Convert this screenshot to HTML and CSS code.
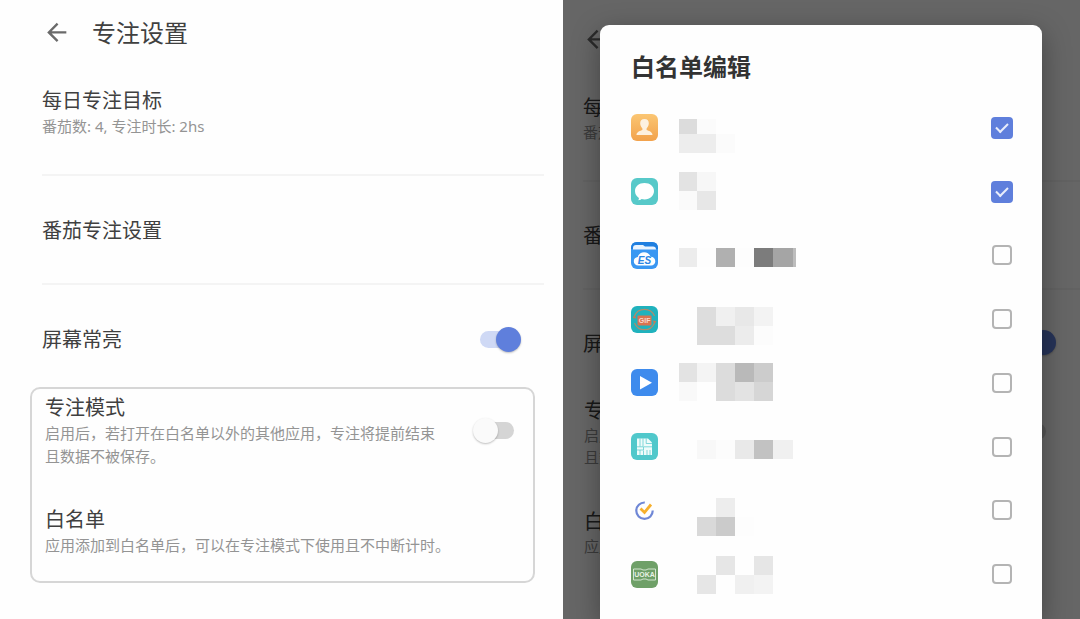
FILE: index.html
```html
<!DOCTYPE html>
<html lang="zh-CN">
<head>
<meta charset="utf-8">
<meta name="viewport" content="width=device-width, initial-scale=1">
<title>专注设置</title>
<link rel="stylesheet" href="styles.css">
</head>
<body>
<div class="screens">
  <main class="pane">
    <header class="header">
      <button class="back" type="button"><svg viewBox="0 0 24 24"><path d="M20 11.500H5M12.500 4L5 11.500L12.500 19"/></svg></button>
      <h1 class="title">专注设置</h1>
    </header>
    <section class="list">
      <div class="item item-goal">
        <h2 class="name">每日专注目标</h2>
        <p class="note">番茄数: 4, 专注时长: 2hs</p>
      </div>
      <div class="item"><h2 class="name">番茄专注设置</h2></div>
      <label class="item item-switch"><span class="name">屏幕常亮</span><input class="switch" type="checkbox" role="switch" checked></label>
    </section>
    <section class="group">
      <label class="mode">
        <span class="copy"><span class="name">专注模式</span><span class="note">启用后，若打开在白名单以外的其他应用，专注将提前结束且数据不被保存。</span></span>
        <input class="switch" type="checkbox" role="switch">
      </label>
      <div class="copy"><h2 class="name">白名单</h2><p class="note">应用添加到白名单后，可以在专注模式下使用且不中断计时。</p></div>
    </section>
  </main>

  <div class="pane pane-dimmed">
    <div class="header">
      <button class="back" type="button"><svg viewBox="0 0 24 24"><path d="M20 11.500H5M12.500 4L5 11.500L12.500 19"/></svg></button>
    </div>
    <div class="list">
      <div class="item item-goal">
        <p class="name">每日</p>
        <p class="note">番茄</p>
      </div>
      <div class="item"><p class="name">番茄</p></div>
      <label class="item item-switch"><span class="name">屏幕</span><input class="switch" type="checkbox" role="switch" checked></label>
    </div>
    <div class="group">
      <label class="mode">
        <span class="copy"><span class="name">专注</span><span class="note">启用<br>且数</span></span>
        <input class="switch" type="checkbox" role="switch">
      </label>
      <div class="copy"><p class="name">白名</p><p class="note">应用</p></div>
    </div>

    <div class="scrim">
      <section class="dialog" role="dialog" aria-labelledby="dialog-title">
        <h2 class="dialog-title" id="dialog-title">白名单编辑</h2>
        <div class="apps">
          <label class="app">
            <svg class="icon" viewBox="0 0 27 27"><defs><linearGradient id="orange" x2="0" y2="1"><stop stop-color="#fbc673"/><stop offset="1" stop-color="#f2a24c"/></linearGradient></defs><rect width="27" height="27" rx="6" fill="url(#orange)"/><path d="M13.500 5C16.500 5 18 7 17.800 9.800C17.600 12 16.500 13.500 15.600 14.400V16C17.500 17 21.500 17.500 21.500 21H5.500C5.500 17.500 9.500 17 11.400 16V14.400C10.500 13.500 9.400 12 9.200 9.800C9 7 10.500 5 13.500 5Z" fill="#fdf1e0"/></svg>
            <svg class="mosaic" viewBox="0 0 120 63"><path fill="#dcdcdc" d="M0 23h18v15H0z"/><path fill="#fbfbfb" d="M18 23h19v15H18zM37 38h19v19H37z"/><path fill="#ededed" d="M0 38h37v19H0z"/></svg>
            <input class="check" type="checkbox" checked>
          </label>
          <label class="app">
            <svg class="icon" viewBox="0 0 27 27"><rect width="27" height="27" rx="6" fill="#57c9c9"/><path d="M13.500 5C19 5 23 8.500 23 13S19 21.500 13.500 21.500C12.500 21.500 11.500 21.400 10.600 21.100C9.800 21.900 8.500 22.300 7 22.300C7.800 21.500 8 20.600 7.900 19.900C5.500 18.400 4 16 4 13C4 8.500 8 5 13.500 5Z" fill="#fff"/></svg>
            <svg class="mosaic" viewBox="0 0 120 63"><path fill="#e3e3e3" d="M0 12h18v19H0z"/><path fill="#f7f7f7" d="M18 12h19v19H18z"/><path fill="#fafafa" d="M0 31h18v19H0z"/><path fill="#e7e7e7" d="M18 31h19v19H18z"/></svg>
            <input class="check" type="checkbox" checked>
          </label>
          <label class="app">
            <svg class="icon" viewBox="0 0 27 27"><rect width="27" height="27" rx="6" fill="#3a97f2"/><path d="M0 7V6Q0 0 6 0H21Q27 0 27 6V7Z" fill="#1f7fe0"/><path d="M2 6Q2 3 5 3H12L14 4.500H22Q25 4.500 25 7.500H2Z" fill="#e9f4ff"/><path d="M7.500 23.500C4.500 23.500 2.800 21.500 2.800 19.200C2.800 16.800 4.500 15.200 6.800 15C7.500 12 10 10.200 13 10.200C16.200 10.200 18.800 12 19.500 14.800C22.500 14.800 24.300 16.700 24.300 19.200C24.300 21.700 22.500 23.500 20 23.500Z" fill="#fff"/><text class="es" x="13.500" y="21.500">ES</text></svg>
            <svg class="mosaic" viewBox="0 0 120 63"><path fill="#ececec" d="M0 24h18v19H0z"/><path fill="#fdfdfd" d="M18 24h19v19H18zM56 24h19v19H56z"/><path fill="#b0b0b0" d="M37 24h19v19H37z"/><path fill="#7c7c7c" d="M75 24h19v19H75z"/><path fill="#a5a5a5" d="M94 24h20v19H94z"/><path fill="#bdbdbd" d="M114 24h3v19h-3z"/></svg>
            <input class="check" type="checkbox">
          </label>
          <label class="app">
            <svg class="icon" viewBox="0 0 27 27"><rect width="27" height="27" rx="6" fill="#20b2bd"/><g fill="none" stroke="#b08c6c" stroke-width="1.200"><path d="M3.500 10A10.800 10.800 0 0 1 23.500 10"/><path d="M23.500 17A10.800 10.800 0 0 1 3.500 17"/></g><path d="M1.500 12L3.500 9L5.500 12.500ZM25.500 15L23.500 18L21.500 14.500Z" fill="#c07c5c"/><rect x="6.500" y="9.500" width="14" height="10" rx="1" fill="#da7350"/><text class="gif" x="13.600" y="17">GIF</text></svg>
            <svg class="mosaic" viewBox="0 0 120 63"><path fill="#ddd" d="M18 19h19v19H18zM18 38h38v19H18z"/><path fill="#f0f0f0" d="M37 19h19v19H37z"/><path fill="#e8e8e8" d="M56 19h19v19H56z"/><path fill="#f3f3f3" d="M75 19h19v19H75z"/><path fill="#ececec" d="M56 38h19v19H56z"/><path fill="#fcfcfc" d="M75 38h19v19H75z"/></svg>
            <input class="check" type="checkbox">
          </label>
          <label class="app">
            <svg class="icon" viewBox="0 0 27 27"><rect width="27" height="27" rx="6" fill="#3e8bed"/><path d="M9 7V20.500L21 13.700Z" fill="#fff"/></svg>
            <svg class="mosaic" viewBox="0 0 120 63"><path fill="#e3e3e3" d="M0 12h18v19H0zM56 31h19v19H56z"/><path fill="#f4f4f4" d="M18 12h19v19H18z"/><path fill="#dcdcdc" d="M37 12h19v38H37z"/><path fill="#b9b9b9" d="M56 12h19v19H56z"/><path fill="#ccc" d="M75 12h19v19H75z"/><path fill="#f9f9f9" d="M0 31h18v19H0z"/><path fill="#d6d6d6" d="M75 31h19v19H75z"/></svg>
            <input class="check" type="checkbox">
          </label>
          <label class="app">
            <svg class="icon" viewBox="0 0 27 27"><rect width="27" height="27" rx="6" fill="#50c8cb"/><path d="M6 5.500H17L21 9.500V22H6Z" fill="#effcfb"/><path d="M9 5.500V13.500M12 5.500V13.500M15.200 5.500V10.500H21M6 13.800H12M6 17H12.500V13.800H21M9 17V22M12.500 17.500V22M16 17V22M19 17V22" fill="none" stroke="#50c8cb" stroke-width=".7"/></svg>
            <svg class="mosaic" viewBox="0 0 120 63"><path fill="#f8f8f8" d="M18 25h19v19H18z"/><path fill="#fcfcfc" d="M37 25h19v19H37z"/><path fill="#e9e9e9" d="M56 25h19v19H56z"/><path fill="#c2c2c2" d="M75 25h19v19H75z"/><path fill="#f0f0f0" d="M94 25h20v19H94z"/></svg>
            <input class="check" type="checkbox">
          </label>
          <label class="app">
            <svg class="icon" viewBox="0 0 27 27"><path d="M13.800 5.500A8.200 8.200 0 1 0 21.700 13.500" fill="none" stroke="#6f87d6" stroke-width="2.200"/><path d="M9.500 11.500L13.500 15.500L20 7.500" fill="none" stroke="#f7b02c" stroke-width="2.800"/></svg>
            <svg class="mosaic" viewBox="0 0 120 63"><path fill="#ededed" d="M37 19h19v19H37z"/><path fill="#d9d9d9" d="M18 38h19v19H18z"/><path fill="#cbcbcb" d="M37 38h19v19H37z"/><path fill="#fdfdfd" d="M56 38h19v19H56z"/></svg>
            <input class="check" type="checkbox">
          </label>
          <label class="app">
            <svg class="icon" viewBox="0 0 27 27"><rect width="27" height="27" rx="6" fill="#6fa068"/><path d="M2.500 8H10L12 9H15L17 8H24.500V19H17L15 18H12L10 19H2.500Z" fill="none" stroke="#d4e5d0" stroke-width="1"/><text class="uoka" x="13.500" y="16">UOKA</text></svg>
            <svg class="mosaic" viewBox="0 0 120 63"><path fill="#e6e6e6" d="M37 13h19v19H37zM75 13h19v19H75zM18 32h19v19H18z"/><path fill="#f0f0f0" d="M56 32h19v19H56z"/><path fill="#f3f3f3" d="M75 32h19v19H75z"/></svg>
            <input class="check" type="checkbox">
          </label>
        </div>
      </section>
    </div>
  </div>
</div>
</body>
</html>
```
FILE: styles.css
```css
* { box-sizing: border-box; }

body {
  margin: 0;
  color: #404040;
  font-family: "Noto Sans", "Noto Sans CJK SC", sans-serif;
  background: #fff;
}

h1, h2, p { margin: 0; font-weight: 400; }

.screens {
  display: grid;
  grid-template-columns: 563fr 517fr;
  height: 100vh;
  overflow: hidden;
}

.pane {
  --name-line: 28px;
  --note-line: 23px;
  --item-top: 41px;
  --item-bottom: 38px;
  --goal-bottom: 36px;
  --group-gap: 38px;
  position: relative;
  min-width: 0;
  overflow: hidden;
  background: #fefefe;
}

.header {
  display: flex;
  align-items: center;
  gap: 21px;
  height: 66px;
  padding-left: 43px;
}

.back {
  width: 28px;
  height: 28px;
  padding: 0;
  border: 0;
  background: none;
}

.back svg {
  display: block;
  fill: none;
  stroke: #6a6a6a;
  stroke-width: 2;
}

.title { font-size: 24px; line-height: 36px; }

.list { margin: 0 19px 0 42px; }

.item {
  padding: var(--item-top) 0 var(--item-bottom);
  border-bottom: 2px solid #f4f4f4;
}

.item-goal { padding: 21px 0 var(--goal-bottom); }

.item-switch {
  display: flex;
  align-items: center;
  justify-content: space-between;
  padding: var(--item-top) 23px 33px 0;
  border-bottom: 0;
}

.name {
  display: block;
  font-size: 20px;
  line-height: var(--name-line);
  white-space: nowrap;
}

.note {
  display: block;
  color: #949494;
  font-size: 15px;
  line-height: var(--note-line);
}

.group {
  display: grid;
  gap: var(--group-gap);
  margin: 0 28px 0 30px;
  padding: 5px 19px 24px 13px;
  border: 2px solid #d6d6d6;
  border-radius: 10px;
}

.mode {
  display: flex;
  align-items: center;
  justify-content: space-between;
  gap: 28px;
}

.switch {
  position: relative;
  flex: none;
  width: 41px;
  height: 25px;
  margin: 0 0 2px;
  appearance: none;
}

.switch::before,
.switch::after {
  content: "";
  position: absolute;
  border-radius: 13px;
}

.switch::before { inset: 4px 0 4px 4px; background: #d5d5d5; }

.switch::after {
  inset: 0 auto 0 0;
  width: 25px;
  background: #fafafa;
  box-shadow: 0 1px 2px rgba(0, 0, 0, .25);
}

.switch:checked::before { inset: 4px 4px 4px 0; background: #cfd9f5; }
.switch:checked::after { inset: 0 0 0 auto; background: #5f7fdc; }

.pane-dimmed {
  --name-line: 27px;
  --note-line: 22px;
  --item-top: 40px;
  --item-bottom: 39px;
  --goal-bottom: 37px;
  --group-gap: 40px;
  padding-top: 7px;
}

.pane-dimmed .header { padding-left: 20px; }
.pane-dimmed .list { margin: 0 0 0 20px; }
.pane-dimmed .item-switch { padding-right: 24px; }

.pane-dimmed .group {
  margin: 0 13px 0 6px;
  border-color: transparent;
}

.scrim {
  position: absolute;
  inset: 0;
  display: flex;
  padding: 25px 38px 0 37px;
  background: rgba(0, 0, 0, .6);
}

.dialog {
  display: flex;
  flex: 1;
  flex-direction: column;
  gap: 12px;
  padding: 25px 30px 13px 31px;
  border-radius: 9px 9px 0 0;
  background: #fefefe;
  box-shadow: 0 8px 28px rgba(0, 0, 0, .35);
}

.dialog-title {
  color: #333;
  font-size: 24px;
  font-weight: 700;
  line-height: 34px;
}

.apps {
  display: grid;
  flex: 1;
  grid-template-rows: repeat(8, 1fr);
}

.app {
  display: flex;
  align-items: center;
}

.icon { width: 27px; height: 27px; margin-right: 21px; }
.mosaic { width: 120px; height: 63px; shape-rendering: crispEdges; }

.icon text {
  font-family: "Liberation Sans", sans-serif;
  font-weight: 700;
  text-anchor: middle;
}

.es { fill: #2c86e4; font-size: 10px; font-style: italic; }
.gif { fill: #f8d9cc; font-size: 7px; }
.uoka { fill: #e8f2e5; font-size: 7px; }

.check {
  display: grid;
  flex: none;
  place-items: center;
  width: 20px;
  height: 20px;
  margin: 0 0 0 auto;
  border: 2px solid #b4b4b4;
  border-radius: 4px;
  appearance: none;
}

.check:checked {
  width: 22px;
  height: 22px;
  margin-right: -1px;
  border: 0;
  background: #5f7fdc;
}

.check:checked::before {
  content: "";
  width: 10px;
  height: 5px;
  margin-bottom: 3px;
  border: solid #e8edfb;
  border-width: 0 0 2px 2px;
  transform: rotate(-45deg);
}
```
